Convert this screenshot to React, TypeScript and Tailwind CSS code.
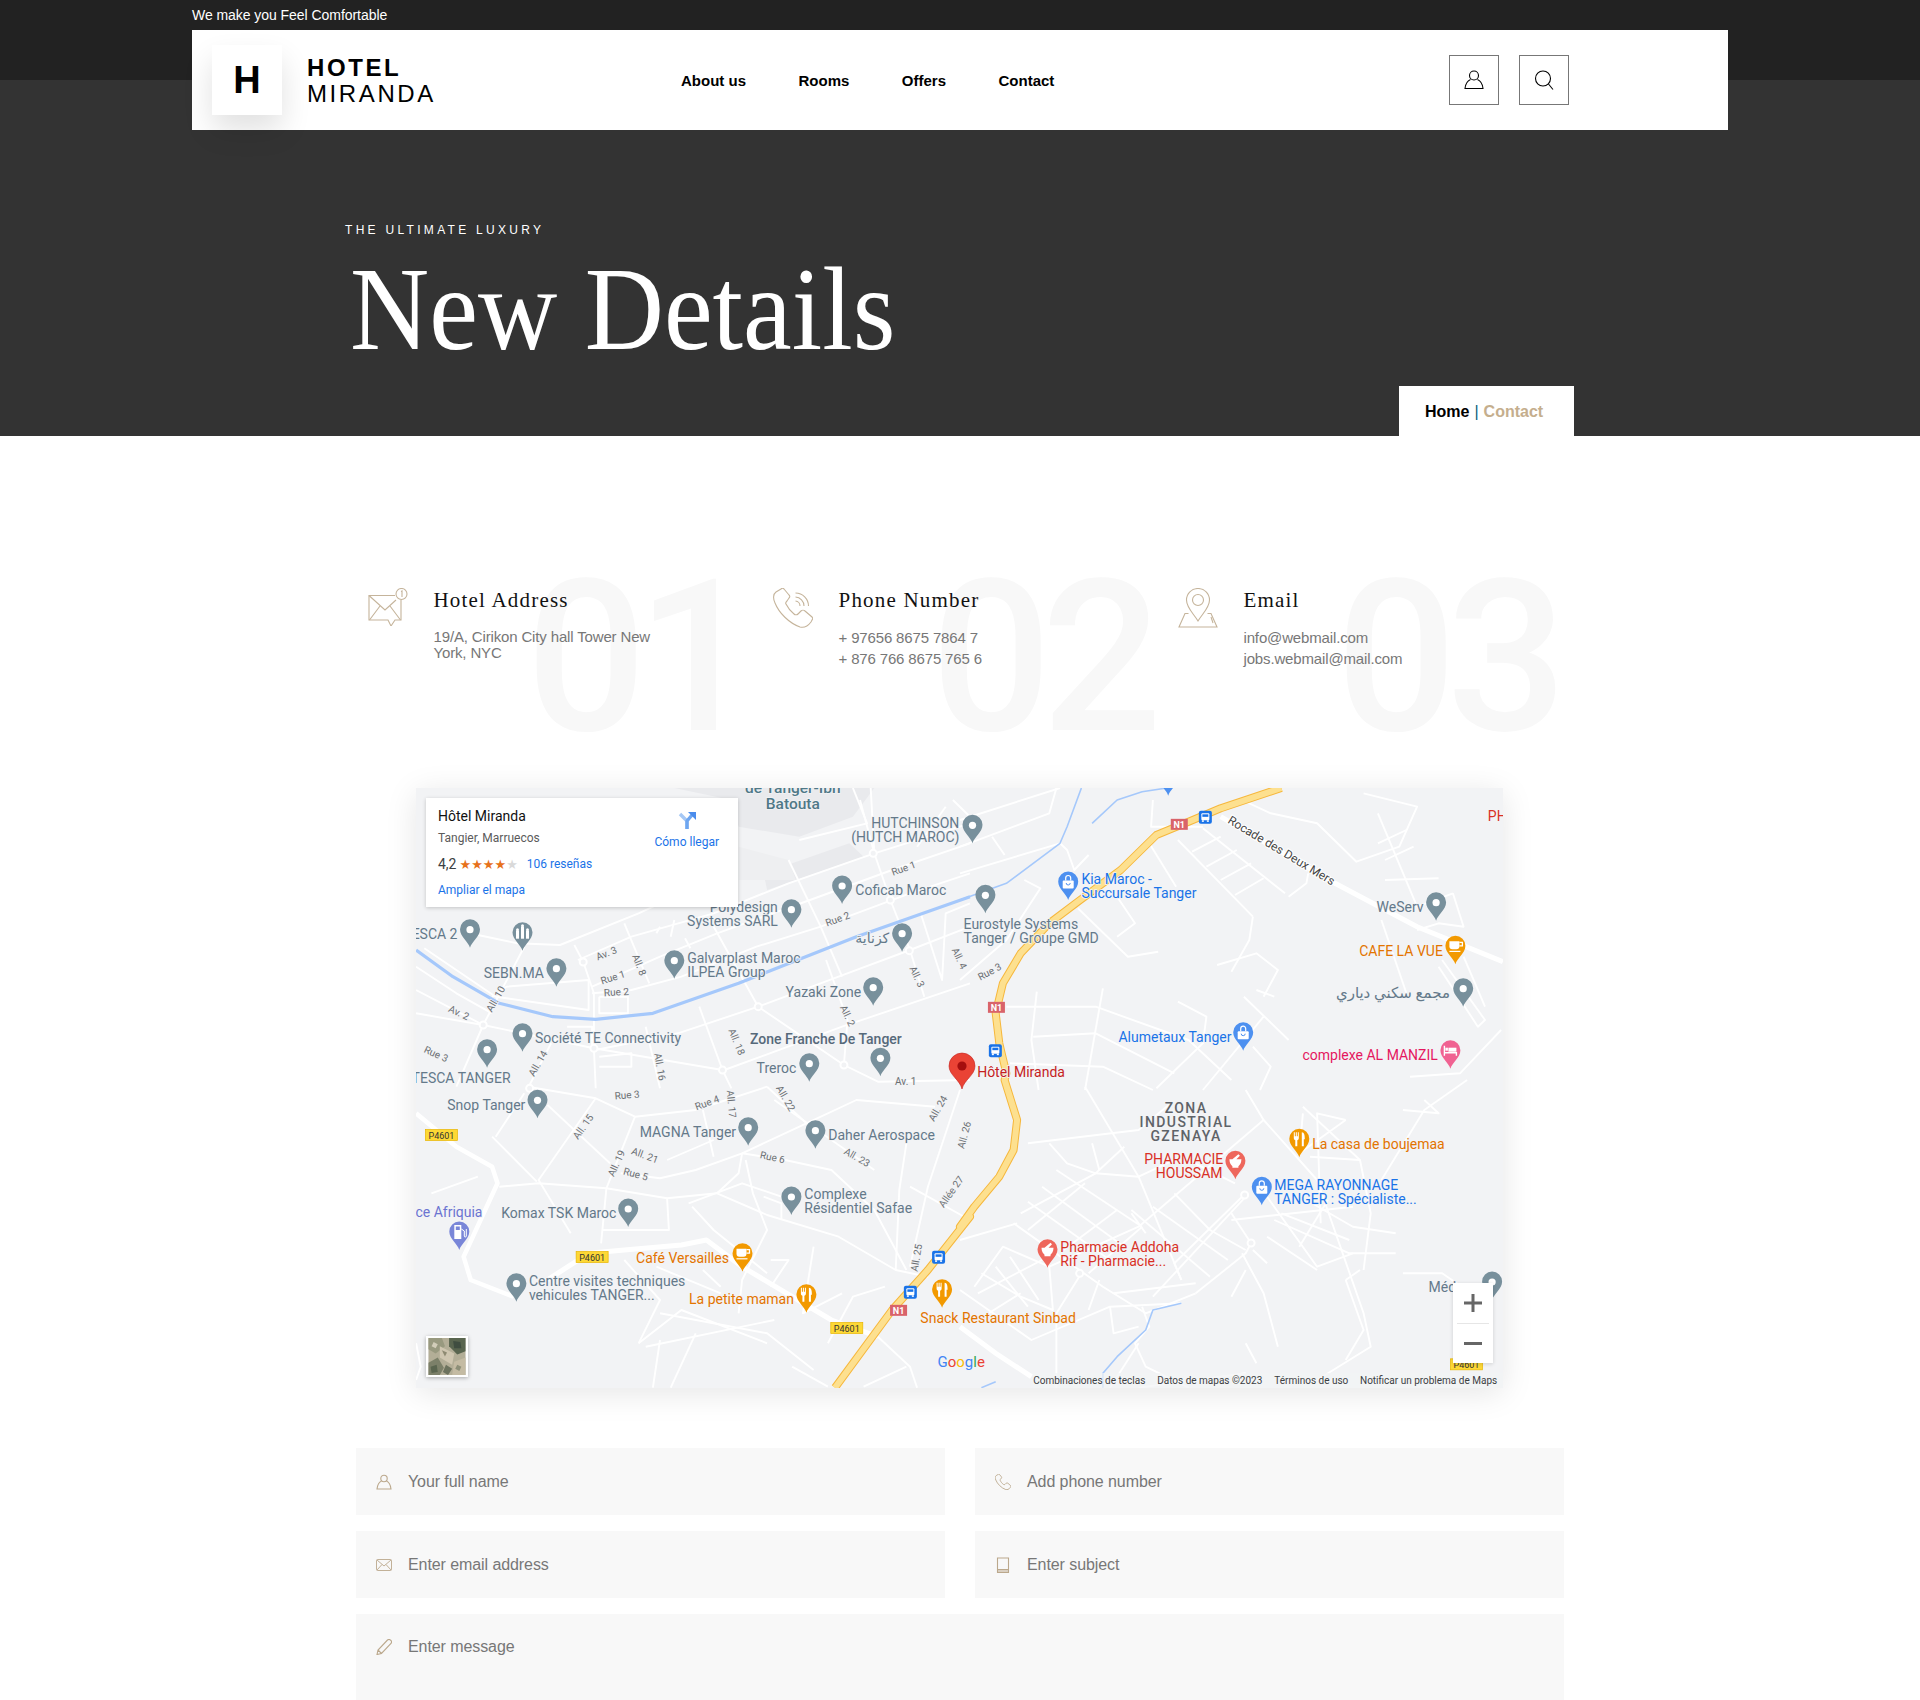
import React from "react";

type Fr = "A" | "B" | "C" | "D";
const F: Record<Fr, [number, number]> = { A: [410, 780], B: [960, 780], C: [410, 1080], D: [960, 1080] };
const X = (f: Fr, x: number) => F[f][0] + x / 2.8;
const Y = (f: Fr, y: number) => F[f][1] + y / 3;
const pts = (f: Fr, s: string) =>
  s
    .trim()
    .split(/\s+/)
    .map((p) => {
      const [a, b] = p.split(",").map(Number);
      return `${X(f, a).toFixed(1)},${Y(f, b).toFixed(1)}`;
    })
    .join(" ");

const thin: [Fr, string][] = [
  ["A", "470,540 620,470 850,400 1060,310 1300,220 1568,130"],
  ["A", "510,620 700,530 860,460 1120,360 1350,270 1568,190"],
  ["A", "510,640 620,630 760,590 970,500 1150,440 1400,340 1568,280"],
  ["A", "975,680 1200,590 1400,510 1568,440"],
  ["A", "520,810 750,760 975,680"],
  ["A", "880,870 1210,740 1568,610"],
  ["A", "17,630 205,735 515,805 875,870"],
  ["A", "17,700 205,735"],
  ["A", "840,420 975,680 1215,855 1310,905 1568,900"],
  ["A", "1060,240 1150,440 1210,590"],
  ["A", "1290,24 1300,220 1345,360 1400,510 1440,650"],
  ["A", "600,430 670,610"],
  ["A", "320,500 205,735 130,920"],
  ["A", "395,790 330,925"],
  ["A", "660,740 700,925"],
  ["A", "810,680 875,870 900,925"],
  ["A", "1165,540 1225,720 1215,855"],
  ["A", "460,495 485,545 515,640 515,805 520,925"],
  ["A", "190,465 300,490 420,495 640,400 700,370"],
  ["A", "40,505 240,650 500,690 500,600 270,620 230,650"],
  ["A", "17,560 130,640 230,700"],
  ["A", "530,650 530,700 610,700 610,650 530,650"],
  ["A", "440,740 510,740 510,800"],
  ["A", "530,830 620,820 620,860 530,860"],
  ["A", "1430,400 1490,600 1500,400 1568,370"],
  ["A", "1260,60 1300,220"],
  ["A", "1090,180 1280,130 1240,24"],
  ["A", "1520,60 1568,110"],
  ["A", "700,440 690,460"],
  ["A", "740,420 730,470"],
  ["A", "770,475 785,505"],
  ["A", "1500,80 1420,200"],
  ["B", "0,120 280,24"],
  ["B", "0,200 250,100 270,24"],
  ["B", "0,280 280,190 300,210 320,270 360,225"],
  ["B", "90,170 125,225"],
  ["B", "180,300 225,325 130,480 0,600"],
  ["B", "530,190 605,320"],
  ["B", "330,385 470,530 555,515"],
  ["B", "440,350 490,430 440,470"],
  ["B", "610,180 820,410"],
  ["B", "680,145 910,340"],
  ["B", "650,215 730,170"],
  ["B", "690,260 775,210"],
  ["B", "730,300 815,250"],
  ["B", "770,345 850,295"],
  ["B", "540,60 535,140 680,140"],
  ["B", "790,60 870,100 1000,130 1110,245 1230,200 1280,80 1130,40"],
  ["B", "1180,420 1250,640"],
  ["B", "1170,100 1280,380 1380,340"],
  ["B", "1170,190 1250,150"],
  ["B", "1190,240 1270,200"],
  ["B", "1190,300 1340,295"],
  ["B", "820,410 810,480 760,575"],
  ["B", "720,555 830,520 890,570 850,650"],
  ["B", "795,650 920,780"],
  ["B", "850,710 680,930"],
  ["B", "830,630 880,650"],
  ["B", "130,680 380,680 640,780 760,900"],
  ["B", "205,770 380,760 600,880"],
  ["B", "400,625 350,930"],
  ["B", "215,635 200,780 220,930"],
  ["B", "610,665 690,710 680,790 550,925"],
  ["B", "820,800 870,860 840,930"],
  ["B", "140,850 400,860 540,930"],
  ["B", "1515,750 1400,880 1260,890"],
  ["B", "1350,540 1470,720 1450,740 1340,560"],
  ["B", "1410,530 1470,680"],
  ["B", "1280,450 1340,430 1410,440 1380,340"],
  ["B", "920,350 970,310 975,280"],
  ["C", "330,20 520,55 630,110 800,90 1000,20"],
  ["C", "385,75 560,250"],
  ["C", "520,55 360,300 450,460"],
  ["C", "230,170 355,305"],
  ["C", "240,170 320,40"],
  ["C", "250,320 360,310 550,325 720,355 860,340 920,280 930,220 800,270 700,295 590,280"],
  ["C", "630,110 550,325 535,490"],
  ["C", "720,240 850,180"],
  ["C", "930,220 1050,240 1180,270 1300,390 1390,570"],
  ["C", "1000,20 1110,130 1250,60 1470,80"],
  ["C", "1110,130 930,220"],
  ["C", "860,340 1000,405 1200,470 1360,570 1450,590"],
  ["C", "940,240 960,340 1000,450 930,600 920,700"],
  ["C", "790,380 850,450 1000,580"],
  ["C", "720,355 725,450 540,450"],
  ["C", "640,790 760,690 1000,790"],
  ["C", "700,700 1000,760 1130,870"],
  ["C", "660,800 1020,720"],
  ["C", "820,90 850,230"],
  ["C", "1540,30 1450,320 1400,560"],
  ["C", "1390,190 1370,330 1360,570"],
  ["C", "1568,420 1400,320"],
  ["C", "1020,60 1300,270"],
  ["C", "1130,500 1100,700 1210,640"],
  ["C", "1010,540 1060,540 1010,620"],
  ["C", "780,370 930,310 1040,350"],
  ["C", "990,350 1040,370 1040,420"],
  ["C", "700,780 680,923"],
  ["C", "800,760 730,923"],
  ["C", "1070,860 1170,920"],
  ["C", "1310,770 1400,860 1420,923"],
  ["C", "1390,860 1270,920"],
  ["C", "1170,790 1240,650 1330,620"],
  ["C", "60,340 190,290"],
  ["C", "690,560 870,640"],
  ["C", "600,540 700,660 640,790"],
  ["C", "820,570 870,620"],
  ["D", "190,190 500,150 590,70"],
  ["D", "350,20 500,290 620,600"],
  ["D", "800,30 850,120 1000,300 1130,700 1150,800 1000,900"],
  ["D", "850,120 500,440 250,560"],
  ["D", "250,190 300,250 380,280 500,290 620,230 770,310"],
  ["D", "170,400 380,280 460,200"],
  ["D", "150,430 400,620 520,700 660,640"],
  ["D", "190,365 420,540"],
  ["D", "230,320 460,500"],
  ["D", "270,270 510,440"],
  ["D", "350,310 190,450"],
  ["D", "440,390 290,510"],
  ["D", "510,440 360,580"],
  ["D", "600,340 700,450 800,510"],
  ["D", "540,380 750,540"],
  ["D", "480,390 700,590"],
  ["D", "790,350 600,550 620,600"],
  ["D", "800,350 540,650"],
  ["D", "760,400 815,490 800,520 660,640"],
  ["D", "760,420 1100,380"],
  ["D", "860,350 1000,560 1100,520"],
  ["D", "860,470 1000,570"],
  ["D", "880,420 1090,520 1220,520"],
  ["D", "900,400 1090,480"],
  ["D", "970,360 1100,440 1220,460"],
  ["D", "950,500 1030,360"],
  ["D", "1010,430 1000,100 1080,120"],
  ["D", "960,80 1120,240 1150,400 1130,570"],
  ["D", "1080,120 950,220 960,100"],
  ["D", "1120,240 980,230"],
  ["D", "1180,300 1300,90 1420,0"],
  ["D", "1240,90 1340,100 1300,60"],
  ["D", "820,510 860,550"],
  ["D", "790,520 850,640 890,800"],
  ["D", "800,570 760,650"],
  ["D", "1080,600 1130,750 1080,840"],
  ["D", "1080,600 1120,570"],
  ["D", "800,790 830,850"],
  ["D", "0,630 200,780 420,680 620,670"],
  ["D", "40,620 120,500 250,560"],
  ["D", "60,580 170,650 260,690 250,560"],
  ["D", "100,560 190,680"],
  ["D", "140,530 220,660"],
  ["D", "50,640 230,540"],
  ["D", "80,700 170,640"],
  ["D", "340,580 270,700 270,923"],
  ["D", "390,600 360,690"],
  ["D", "430,640 660,610"],
  ["D", "420,680 430,760 500,740"],
  ["D", "510,680 530,740 490,790 520,860 640,923"],
  ["D", "500,790 420,923"],
  ["D", "800,880 500,923"],
  ["D", "0,480 160,430"],
  ["D", "1240,580 1350,580 1460,660"],
  ["D", "390,270 370,190"],
  ["D", "480,400 520,460"],
  ["C", "17,790 30,860 17,900"],
];

const blue: [Fr, string, number][] = [
  ["A", "17,510 120,590 250,670 400,710 520,718 680,700 920,610 1250,470 1568,350", 3.2],
  ["B", "0,360 130,310 280,190 300,140 340,24", 1.6],
  ["B", "370,130 440,60 510,35 580,24", 1.6],
  ["D", "620,670 540,690 520,750 440,830 400,880 400,923", 1.6],
  ["D", "100,905 60,923", 1.6],
];

const roundabouts: [Fr, number, number][] = [
  ["A", 485, 546], ["A", 205, 735], ["A", 515, 805], ["A", 875, 870], ["A", 975, 680], ["A", 1215, 855],
  ["A", 1297, 220], ["A", 1345, 360], ["A", 1398, 512], ["D", 797, 345], ["D", 815, 489], ["D", 335, 580], ["C", 335, 25],
];

type Lbl = [Fr, number, number, "start" | "end" | "middle", string, string, number?, number?];
const GR = "#64798a";
const BL = "#1a73e8";
const OR = "#e37400";
const RD = "#d93025";
const labels: Lbl[] = [
  ["A", 1072, 25, "middle", "#4f7887", "de Tanger-Ibn", 500, 15.5],
  ["A", 1072, 73, "middle", "#4f7887", "Batouta", 500, 15.5],
  ["A", 1538, 129, "end", GR, "HUTCHINSON"],
  ["A", 1538, 171, "end", GR, "(HUTCH MAROC)"],
  ["A", 1247, 331, "start", GR, "Coficab Maroc"],
  ["A", 1030, 382, "end", GR, "Polydesign"],
  ["A", 1030, 424, "end", GR, "Systems SARL"],
  ["A", 133, 462, "end", GR, "TESCA 2"],
  ["A", 375, 580, "end", GR, "SEBN.MA"],
  ["A", 776, 535, "start", GR, "Galvarplast Maroc"],
  ["A", 776, 577, "start", GR, "ILPEA Group"],
  ["A", 1342, 475, "end", GR, "كزناية"],
  ["A", 1263, 637, "end", GR, "Yazaki Zone"],
  ["A", 350, 775, "start", GR, "Société TE Connectivity"],
  ["A", 282, 895, "end", GR, "TESCA TANGER"],
  ["A", 952, 778, "start", "#56697a", "Zone Franche De Tanger", 500],
  ["A", 1082, 865, "end", GR, "Treroc"],
  ["B", 10, 433, "start", GR, "Eurostyle Systems"],
  ["B", 10, 475, "start", GR, "Tanger / Groupe GMD"],
  ["B", 340, 298, "start", BL, "Kia Maroc -"],
  ["B", 340, 340, "start", BL, "Succursale Tanger"],
  ["B", 1298, 381, "end", GR, "WeServ"],
  ["B", 1352, 513, "end", OR, "CAFE LA VUE"],
  ["B", 1372, 640, "end", GR, "مجمع سكني دياري", 400, 15],
  ["B", 760, 772, "end", BL, "Alumetaux Tanger"],
  ["B", 1338, 826, "end", "#e5175f", "complexe AL MANZIL"],
  ["B", 48, 877, "start", "#c5221f", "Hôtel Miranda"],
  ["B", 1478, 107, "start", RD, "PH"],
  ["C", 323, 76, "end", GR, "Snop Tanger"],
  ["C", 913, 156, "end", GR, "MAGNA Tanger"],
  ["C", 1171, 166, "start", GR, "Daher Aerospace"],
  ["C", 1104, 343, "start", GR, "Complexe"],
  ["C", 1104, 385, "start", GR, "Résidentiel Safae"],
  ["C", 578, 400, "end", GR, "Komax TSK Maroc"],
  ["C", 203, 397, "end", "#6b74d1", "ce Afriquia"],
  ["C", 893, 535, "end", OR, "Café Versailles"],
  ["C", 333, 604, "start", GR, "Centre visites techniques"],
  ["C", 333, 646, "start", GR, "vehicules TANGER..."],
  ["C", 1075, 658, "end", OR, "La petite maman"],
  ["C", 1429, 714, "start", OR, "Snack Restaurant Sinbad"],
  ["D", 516, 238, "start", RD, "PHARMACIE"],
  ["D", 735, 280, "end", RD, "HOUSSAM"],
  ["D", 986, 193, "start", OR, "La casa de boujemaa"],
  ["D", 880, 316, "start", BL, "MEGA RAYONNAGE"],
  ["D", 880, 358, "start", BL, "TANGER : Spécialiste..."],
  ["D", 281, 501, "start", RD, "Pharmacie Addoha"],
  ["D", 281, 543, "start", RD, "Rif - Pharmacie..."],
  ["D", 1312, 622, "start", GR, "Méd"],
];

const areaLabels: [number, string][] = [
  [85, "ZONA"],
  [127, "INDUSTRIAL"],
  [169, "GZENAYA"],
];

const roadLabels: [Fr, number, number, number, string][] = [
  ["A", 1382, 265, -20, "Rue 1"], ["A", 1197, 417, -20, "Rue 2"], ["A", 550, 520, -22, "Av. 3"],
  ["A", 568, 592, -18, "Rue 1"], ["A", 642, 555, 68, "All. 8"], ["A", 578, 636, -3, "Rue 2"],
  ["A", 240, 657, -60, "All. 10"], ["A", 137, 698, 25, "Av. 2"], ["A", 73, 822, 25, "Rue 3"],
  ["A", 358, 850, -60, "All. 14"], ["A", 700, 860, 80, "All. 16"], ["A", 915, 785, 68, "All. 18"],
  ["A", 1225, 707, 65, "All. 2"], ["A", 1420, 590, 65, "All. 3"], ["A", 1538, 535, 65, "All. 4"],
  ["A", 1388, 904, 0, "Av. 1"], ["B", 83, 575, -28, "Rue 3"], ["C", 608, 45, -5, "Rue 3"],
  ["C", 832, 68, -20, "Rue 4"], ["C", 900, 72, 85, "All. 17"], ["C", 1052, 55, 60, "All. 22"],
  ["C", 1478, 85, -60, "All. 24"], ["C", 1552, 165, -75, "All. 26"], ["C", 485, 140, -55, "All. 15"],
  ["C", 658, 226, 20, "All. 21"], ["C", 578, 250, -65, "All. 19"], ["C", 632, 282, 15, "Rue 5"],
  ["C", 1015, 232, 12, "Rue 6"], ["C", 1252, 232, 30, "All. 23"], ["C", 1515, 335, -55, "Allée 27"],
  ["C", 1418, 533, -80, "All. 25"],
];

type Kind = "dot" | "bag" | "cup" | "fork" | "mortar" | "bed" | "fuel" | "city";
const pins: [Fr, number, number, string, Kind][] = [
  ["A", 1068, 443, "#78909c", "dot"], ["A", 1210, 372, "#78909c", "dot"], ["A", 168, 503, "#78909c", "dot"],
  ["A", 315, 512, "#78909c", "city"], ["A", 410, 620, "#78909c", "dot"], ["A", 740, 596, "#78909c", "dot"],
  ["A", 1378, 515, "#78909c", "dot"], ["A", 1297, 677, "#78909c", "dot"], ["A", 315, 815, "#78909c", "dot"],
  ["A", 216, 863, "#78909c", "dot"], ["A", 1118, 905, "#78909c", "dot"], ["A", 1317, 889, "#78909c", "dot"],
  ["B", 35, 190, "#78909c", "dot"], ["B", 71, 400, "#78909c", "dot"], ["B", 303, 360, "#4d90f0", "bag"],
  ["B", 1333, 422, "#78909c", "dot"], ["B", 1387, 553, "#f29900", "cup"], ["B", 1409, 680, "#78909c", "dot"],
  ["B", 793, 812, "#4d90f0", "bag"], ["B", 1373, 866, "#f06292", "bed"], ["C", 357, 115, "#78909c", "dot"],
  ["C", 947, 197, "#78909c", "dot"], ["C", 1135, 206, "#78909c", "dot"], ["C", 1068, 405, "#78909c", "dot"],
  ["C", 611, 441, "#78909c", "dot"], ["C", 138, 510, "#7986d8", "fuel"], ["C", 931, 575, "#f29900", "cup"],
  ["C", 298, 665, "#78909c", "dot"], ["C", 1110, 698, "#f29900", "fork"], ["C", 1490, 683, "#f29900", "fork"],
  ["D", 771, 298, "#ee675c", "mortar"], ["D", 950, 232, "#f29900", "fork"], ["D", 845, 376, "#4d90f0", "bag"],
  ["D", 245, 563, "#ee675c", "mortar"], ["D", 1490, 660, "#78909c", "dot"], ["B", 583, 47, "#4d90f0", "dot"],
];

function PinGlyph({ k, fill }: { k: Kind; fill: string }) {
  switch (k) {
    case "dot":
      return <circle cx="0" cy="-18" r="3.6" fill="#fff" />;
    case "bag":
      return (
        <g>
          <rect x="-5.5" y="-19.5" width="11" height="8" rx="1" fill="#fff" />
          <path d="M-2.5 -19.5 V-22 a2.5 2.5 0 0 1 5 0 V-19.5" fill="none" stroke="#fff" strokeWidth="1.2" />
          <path d="M-2 -17 a2 2 0 0 0 4 0" fill="none" stroke={fill} strokeWidth="1" />
        </g>
      );
    case "cup":
      return (
        <g>
          <path d="M-6 -23 H4 V-18 a3 3 0 0 1 -3 3 H-3 a3 3 0 0 1 -3 -3Z" fill="#fff" />
          <path d="M4 -22 H7 V-18.5 H4" fill="none" stroke="#fff" strokeWidth="1.3" />
          <rect x="-6" y="-13.5" width="11" height="1.2" fill="#fff" />
        </g>
      );
    case "fork":
      return (
        <g fill="#fff">
          <path d="M-5.5 -25 h1 v4 h1 v-4 h1 v4 h1 v-4 h1 v6 a2 2 0 0 1 -1.5 2 V-11 h-2 v-6 a2 2 0 0 1 -1.5 -2Z" />
          <path d="M2.5 -25 c2.5 0 3 3 3 7 h-1 V-11 h-2Z" />
        </g>
      );
    case "mortar":
      return <path d="M-6 -20 H-3 L3 -25 L4.5 -23.5 L1 -20 H6 C6 -16 4 -14 3 -13 V-11.5 H-3 V-13 C-4 -14 -6 -16 -6 -20Z" fill="#fff" />;
    case "bed":
      return (
        <g fill="none" stroke="#fff" strokeWidth="1.4">
          <path d="M-6 -23 V-13 M-6 -16 H6 V-13" />
          <rect x="-5" y="-21" width="2.5" height="3" fill="#fff" stroke="none" />
          <rect x="-2" y="-21" width="8" height="4" fill="#fff" stroke="none" />
        </g>
      );
    case "fuel":
      return (
        <g fill="#fff">
          <path d="M-5 -25 H2 V-11 H-5Z" />
          <rect x="-3.5" y="-23.5" width="4" height="3.5" fill={fill} />
          <path d="M2 -21 L5 -19 V-14 a1 1 0 0 0 2 0 V-21" fill="none" stroke="#fff" strokeWidth="1" />
        </g>
      );
    case "city":
      return (
        <g fill="#fff">
          <rect x="-6.5" y="-20" width="3" height="8" />
          <rect x="-1.5" y="-24" width="3" height="12" />
          <rect x="3.5" y="-20" width="3" height="8" />
          <circle cx="-5" cy="-21" r="1.5" />
          <circle cx="0" cy="-25" r="1.5" />
          <circle cx="5" cy="-21" r="1.5" />
        </g>
      );
  }
}

function Pin({ f, x, y, fill, k }: { f: Fr; x: number; y: number; fill: string; k: Kind }) {
  return (
    <g transform={`translate(${X(f, x).toFixed(1)} ${Y(f, y).toFixed(1)})`}>
      <path d="M0 0 C-1.5 -6 -10 -11 -10 -18.5 A10 10 0 1 1 10 -18.5 C10 -11 1.5 -6 0 0Z" fill={fill} />
      <PinGlyph k={k} fill={fill} />
    </g>
  );
}

function Shield({ f, x, y, t }: { f: Fr; x: number; y: number; t: string }) {
  const cx = X(f, x);
  const cy = Y(f, y);
  return (
    <g>
      <rect x={cx - 8.5} y={cy - 5.5} width="17" height="11" fill="#d9636a" />
      <text x={cx} y={cy + 0.5} textAnchor="middle" dominantBaseline="central" fontSize="9" fontWeight="700" fill="#fff">
        {t}
      </text>
    </g>
  );
}

function P4601({ f, x, y }: { f: Fr; x: number; y: number }) {
  const cx = X(f, x);
  const cy = Y(f, y);
  return (
    <g>
      <rect x={cx - 16} y={cy - 5.5} width="32" height="11" fill="#fdd835" stroke="#e8b500" strokeWidth="0.7" />
      <text x={cx} y={cy + 0.5} textAnchor="middle" dominantBaseline="central" fontSize="9" fill="#333">
        P4601
      </text>
    </g>
  );
}

function Bus({ f, x, y }: { f: Fr; x: number; y: number }) {
  const cx = X(f, x);
  const cy = Y(f, y);
  return (
    <g transform={`translate(${cx} ${cy})`}>
      <rect x="-6.5" y="-6.5" width="13" height="13" rx="2" fill="#1a73e8" />
      <rect x="-4" y="-4" width="8" height="7" rx="1" fill="#fff" />
      <rect x="-3" y="-3" width="6" height="2.5" fill="#1a73e8" />
      <rect x="-3.5" y="3" width="2" height="1.5" fill="#fff" />
      <rect x="1.5" y="3" width="2" height="1.5" fill="#fff" />
    </g>
  );
}

function MapDrawing() {
  const yellow = [
    `${pts("B", "900,24 730,85 640,125 550,165 450,270 330,365 250,430 170,520 120,610 100,700 110,790 130,880")}`,
    `${pts("D", "125,0 160,120 150,210 110,290 40,380 0,440")}`,
    `${pts("C", "1568,410 1450,570 1350,690 1190,923")}`,
  ].join(" ");
  return (
    <svg viewBox="416 788 1087 600" className="block h-full w-full bg-[#f2f3f5]" fontFamily="Roboto, 'DejaVu Sans', sans-serif">
      <polygon points={pts("A", "740,24 1300,24 1240,110 1090,170 920,140 900,60")} fill="#e9eaed" />
      <polygon points={pts("A", "990,280 1230,190 1270,230 1000,330")} fill="#e9eaed" />
      <polygon points={pts("A", "920,200 1060,240 1080,300 920,300")} fill="#eeeff1" />
      {thin.map(([f, s], i) => (
        <polyline key={i} points={pts(f, s)} fill="none" stroke="#fff" strokeWidth="1.9" strokeLinejoin="round" />
      ))}
      {roundabouts.map(([f, x, y], i) => (
        <circle key={i} cx={X(f, x)} cy={Y(f, y)} r="3.5" fill="#f2f3f5" stroke="#fff" strokeWidth="2" />
      ))}
      {blue.map(([f, s, w], i) => (
        <polyline key={i} points={pts(f, s)} fill="none" stroke="#a5c8fb" strokeWidth={w} strokeLinejoin="round" />
      ))}
      <polyline points={pts("B", "730,110 1050,310 1280,440 1520,545")} fill="none" stroke="#fff" strokeWidth="5" />
      <polyline points={pts("C", "17,100 130,200 230,260 245,310 150,530 170,600 290,650")} fill="none" stroke="#fff" strokeWidth="4.5" strokeLinejoin="round" />
      <polyline points={pts("C", "370,610 500,520 600,510 760,495 830,480 930,560 1180,720 1310,770")} fill="none" stroke="#fff" strokeWidth="5" strokeLinejoin="round" />
      <polyline points={pts("D", "0,740 100,820 200,890")} fill="none" stroke="#fff" strokeWidth="5" />
      <polyline points={yellow} fill="none" stroke="#f6b73c" strokeWidth="8" strokeLinejoin="round" />
      <polyline points={yellow} fill="none" stroke="#fde08f" strokeWidth="6" strokeLinejoin="round" />
      {pins.map(([f, x, y, c, k], i) => (
        <Pin key={i} f={f} x={x} y={y} fill={c} k={k} />
      ))}
      <g paintOrder="stroke" stroke="#f2f3f5" strokeWidth="1.5">
        {labels.map(([f, x, y, a, c, t, w, s], i) => (
          <text key={i} x={X(f, x)} y={Y(f, y)} textAnchor={a} dominantBaseline="central" fill={c} fontWeight={w || 400} fontSize={s || 14}>
            {t}
          </text>
        ))}
      </g>
      <g fontSize="14" fontWeight="500" fill="#5f6368" letterSpacing="1.4" textAnchor="middle" paintOrder="stroke" stroke="#f2f3f5" strokeWidth="1.5">
        {areaLabels.map(([y, t]) => (
          <text key={t} x={X("D", 633)} y={Y("D", y)} dominantBaseline="central">
            {t}
          </text>
        ))}
      </g>
      <text
        transform={`translate(${X("B", 900)} ${Y("B", 212)}) rotate(31)`}
        textAnchor="middle"
        dominantBaseline="central"
        fontSize="12"
        fill="#444"
        paintOrder="stroke"
        stroke="#fff"
        strokeWidth="2"
      >
        Rocade des Deux Mers
      </text>
      <g fontSize="10" fill="#6b6f73" paintOrder="stroke" stroke="#f2f3f5" strokeWidth="1.5">
        {roadLabels.map(([f, x, y, r, t], i) => (
          <text key={i} textAnchor="middle" dominantBaseline="central" transform={`translate(${X(f, x).toFixed(1)} ${Y(f, y).toFixed(1)}) rotate(${r})`}>
            {t}
          </text>
        ))}
      </g>
      <Shield f="B" x={614} y={133} t="N1" />
      <Shield f="B" x={102} y={682} t="N1" />
      <Shield f="C" x={1368} y={691} t="N1" />
      <P4601 f="C" x={88} y={165} />
      <P4601 f="C" x={510} y={531} />
      <P4601 f="C" x={1223} y={744} />
      <P4601 f="D" x={1418} y={853} />
      <Bus f="B" x={687} y={112} />
      <Bus f="B" x={99} y={812} />
      <Bus f="C" x={1480} y={532} />
      <Bus f="C" x={1401} y={637} />
      <g transform="translate(962 1089)">
        <path d="M0 0 C-2 -9 -13 -14 -13 -23 A13 13 0 1 1 13 -23 C13 -14 2 -9 0 0Z" fill="#ea4335" stroke="#c5221f" strokeWidth="0.6" />
        <circle cx="0" cy="-23" r="4.6" fill="#a50e0e" />
      </g>
      <text x={X("C", 1477)} y={Y("D", 845)} dominantBaseline="central" fontSize="15" fontWeight="400">
        <tspan fill="#4285f4">G</tspan>
        <tspan fill="#ea4335">o</tspan>
        <tspan fill="#fbbc05">o</tspan>
        <tspan fill="#4285f4">g</tspan>
        <tspan fill="#34a853">l</tspan>
        <tspan fill="#ea4335">e</tspan>
      </text>
      <g fontSize="10" fill="#3c4043" dominantBaseline="central">
        <rect x="1033" y="1373" width="470" height="15" fill="#f2f3f5" opacity="0.7" stroke="none" />
        <text x={X("D", 205)} y={Y("D", 902)}>Combinaciones de teclas</text>
        <text x={X("D", 552)} y={Y("D", 902)}>Datos de mapas ©2023</text>
        <text x={X("D", 880)} y={Y("D", 902)}>Términos de uso</text>
        <text x={X("D", 1120)} y={Y("D", 902)}>Notificar un problema de Maps</text>
      </g>
    </svg>
  );
}

function Satellite() {
  return (
    <svg viewBox="0 0 36 36" className="h-full w-full">
      <rect width="36" height="36" fill="#b3ae97" />
      <path d="M0 0 H13 L16 8 L7 15 L0 11Z" fill="#98997f" />
      <path d="M20 0 H36 V13 L28 16 L20 8Z" fill="#59654f" />
      <path d="M24 3 L31 4 L32 10 L25 10Z" fill="#3f4d40" />
      <path d="M0 24 L9 19 L15 29 L11 36 H0Z" fill="#7c8069" />
      <path d="M2 28 L8 26 L9 33 L3 34Z" fill="#5a654f" />
      <path d="M11 8 L25 15 L23 26 L11 19Z" fill="#cfc6b0" />
      <path d="M25 23 L36 19 V36 H23Z" fill="#c4bba3" />
      <path d="M5 4 L9 6 L7 10 L3 8Z" fill="#d2cdb9" />
      <path d="M17 26 L23 30 L19 36 L14 33Z" fill="#6d735e" />
      <path d="M28 26 L32 28 L30 32 L26 30Z" fill="#8d8f78" />
      <path d="M13 12 L18 14 L16 18Z" fill="#8e8a72" />
    </svg>
  );
}

const iconCls = "fill-none stroke-[#c5b49b]";

function EnvelopeBig() {
  return (
    <svg viewBox="0 0 40 38" className={`h-[38px] w-[40px] ${iconCls}`} strokeWidth="1.1">
      <path d="M27 7.5 H1 V32 H20 L23 38 L27 32 H33 V12" />
      <path d="M1 7.5 L17 22 L28 12 M1.5 32 L12 18 M32.5 32 L22 18" />
      <circle cx="33.5" cy="6" r="5.5" />
      <path d="M33 3.5 L34 3 V9" />
    </svg>
  );
}

function PhoneBig() {
  return (
    <svg viewBox="0 0 40 40" className={`h-[40px] w-[40px] ${iconCls}`} strokeWidth="1.1">
      <path d="M8 1 L3 4 C0 6 0 11 2 15 C6 25 16 35 27 39 C31 40 35 38 38 34 L39 32 C40 31 40 30 39 29 L32 23 C31 22 29 22 28 23 L25 26 C24 27 22 27 21 26 C17 23 15 20 13 16 C12 15 13 14 14 13 L16 10 C17 9 17 8 16 7 L11 1 C10 0 9 0 8 1Z" />
      <path d="M22.5 13 A5 5 0 0 1 27 18 M22.5 9 A9 9 0 0 1 31 18 M22.5 5 A13 13 0 0 1 35.5 18" />
    </svg>
  );
}

function PinBig() {
  return (
    <svg viewBox="0 0 40 40" className={`h-[40px] w-[40px] ${iconCls}`} strokeWidth="1.1">
      <path d="M20 33 C16 26 8.5 20 8.5 12 A11.5 11.5 0 0 1 31.5 12 C31.5 20 24 26 20 33Z" />
      <circle cx="20" cy="12" r="5.5" />
      <path d="M10.5 25.5 H7 L1 39 H39 L33 25.5 H29.5" />
      <path d="M33 29 L35 35" />
    </svg>
  );
}

function SmallIcon({ k }: { k: "user" | "mail" | "phone" | "book" | "pen" }) {
  const c = "h-[16px] w-[16px] fill-none stroke-[#bba88c]";
  if (k === "user")
    return (
      <svg viewBox="0 0 16 16" className={c} strokeWidth="1.1">
        <circle cx="8" cy="4.5" r="3.2" />
        <path d="M5.5 7 C3 8 1.5 11 1 15 H15 C14.5 11 13 8 10.5 7" />
      </svg>
    );
  if (k === "mail")
    return (
      <svg viewBox="0 0 16 16" className={c} strokeWidth="0.9">
        <rect x="0.5" y="2.5" width="15" height="11" rx="1" />
        <path d="M1 3 L8 9 L15 3 M1 13 L6 7.5 M15 13 L10 7.5" />
      </svg>
    );
  if (k === "phone")
    return (
      <svg viewBox="0 0 40 40" className={c} strokeWidth="2.2">
        <path d="M8 1 L3 4 C0 6 0 11 2 15 C6 25 16 35 27 39 C31 40 35 38 38 34 L39 32 C40 31 40 30 39 29 L32 23 C31 22 29 22 28 23 L25 26 C24 27 22 27 21 26 C17 23 15 20 13 16 C12 15 13 14 14 13 L16 10 C17 9 17 8 16 7 L11 1 C10 0 9 0 8 1Z" />
      </svg>
    );
  if (k === "book")
    return (
      <svg viewBox="0 0 16 16" className={c} strokeWidth="1.1">
        <path d="M2.5 1 H13.5 V15.5 H2.5Z M2.5 12.5 H13.5 M2.5 14 H13.5" />
      </svg>
    );
  return (
    <svg viewBox="0 0 16 16" className={c} strokeWidth="1.1">
      <path d="M1 15.5 L2 11 L11.5 1 C12.5 0.2 14 0.5 15 1.5 C15.7 2.5 15.7 3.5 15 4.5 L5.5 14.5Z M2 11 L5.5 14.5" />
    </svg>
  );
}

const navItems = ["About us", "Rooms", "Offers", "Contact"];

const cards = [
  { icon: <EnvelopeBig />, title: "Hotel Address", num: "01", lines: ["19/A, Cirikon City hall Tower New York, NYC"], tight: true },
  { icon: <PhoneBig />, title: "Phone Number", num: "02", lines: ["+ 97656 8675 7864 7", "+ 876 766 8675 765 6"], tight: false },
  { icon: <PinBig />, title: "Email", num: "03", lines: ["info@webmail.com", "jobs.webmail@mail.com"], tight: false },
];

function Field({ k, text }: { k: "user" | "mail" | "phone" | "book" | "pen"; text: string }) {
  return (
    <div className="flex h-[67px] items-center bg-[#f8f8f8] pl-[20px]">
      <SmallIcon k={k} />
      <span className="ml-[16px] text-[16px] leading-none tracking-[-0.08px] text-[#777]">{text}</span>
    </div>
  );
}

export default function App() {
  return (
    <div className="h-[1700px] overflow-hidden bg-white font-['Liberation_Sans',Arial,sans-serif]">
      <section className="flex h-[436px] flex-col bg-[#333]">
        <div className="h-[80px] bg-[#222] px-[192px]">
          <p className="text-[14px] leading-[30px] tracking-[-0.05px] text-white">We make you Feel Comfortable</p>
        </div>
        <header className="relative mx-[192px] -mt-[50px] flex h-[100px] items-center bg-white">
          <div className="ml-[20px] flex h-[70px] w-[70px] items-center justify-center bg-white text-[38px] font-bold text-black shadow-[0_15px_30px_rgba(0,0,0,0.12)]">
            H
          </div>
          <div className="ml-[25px] mt-[2px] text-[24px] leading-[26px] tracking-[2.6px] text-black">
            <div className="font-bold">HOTEL</div>
            <div>MIRANDA</div>
          </div>
          <nav className="absolute left-[489px] top-[41px] flex gap-[52.5px] text-[15px] font-bold leading-[20px] text-black">
            {navItems.map((n) => (
              <span key={n}>{n}</span>
            ))}
          </nav>
          <div className="absolute left-[1257px] flex gap-[20px]">
            <button className="flex h-[50px] w-[50px] items-center justify-center border border-[#777]">
              <svg viewBox="0 0 20 20" className="h-[20px] w-[20px] fill-none stroke-black" strokeWidth="1.1">
                <circle cx="10" cy="5.5" r="4.5" />
                <path d="M6.5 9.5 C3 11 1.5 14 1 18.5 H19 C18.5 14 17 11 13.5 9.5" />
              </svg>
            </button>
            <button className="flex h-[50px] w-[50px] items-center justify-center border border-[#777]">
              <svg viewBox="0 0 20 20" className="h-[20px] w-[20px] fill-none stroke-black" strokeWidth="1.1">
                <circle cx="9" cy="8.5" r="7.5" />
                <path d="M14.5 14 L19 19.5" />
              </svg>
            </button>
          </div>
        </header>
        <p className="ml-[345px] mt-[93px] text-[12px] font-medium leading-[14px] tracking-[3.3px] text-white">THE ULTIMATE LUXURY</p>
        <h1 className="ml-[350px] mt-[13px] origin-left scale-x-[0.93] font-['Liberation_Serif',serif] text-[118px] font-normal leading-[120px] text-white">
          New Details
        </h1>
        <div className="ml-[1399px] mt-auto flex h-[50px] w-[175px] items-center bg-white pl-[26px] pt-[2px] text-[16px] font-bold">
          <span className="text-black">Home</span>
          <span className="mx-[5px] font-normal text-[#0b5f7a]">|</span>
          <span className="text-[#c5ae8d]">Contact</span>
        </div>
      </section>

      <section className="ml-[356px] grid w-[1215px] grid-cols-3 pt-[152px]">
        {cards.map((c) => (
          <div key={c.num} className="relative h-[200px] pl-[12px]">
            <span className="absolute left-[170px] top-[-55px] font-['Roboto',sans-serif] text-[212px] font-medium leading-[250px] tracking-[-10px] text-[#f8f8f8]">
              {c.num}
            </span>
            <div className="relative flex">
              <div className="w-[65.5px] shrink-0">{c.icon}</div>
              <div className="w-[225px]">
                <h3 className="font-['Liberation_Serif',serif] text-[21px] font-normal leading-[24px] tracking-[1.2px] text-[#111]">{c.title}</h3>
                <div className={`text-[15px] tracking-[-0.15px] text-[#777] ${c.tight ? "mt-[17px] leading-[16px]" : "mt-[15px] leading-[21px]"}`}>
                  {c.lines.map((l) => (
                    <p key={l}>{l}</p>
                  ))}
                </div>
              </div>
            </div>
          </div>
        ))}
      </section>

      <section className="relative ml-[416px] h-[600px] w-[1087px] shadow-[0_5px_30px_rgba(0,0,0,0.1)]">
        <MapDrawing />
        <div className="absolute left-[10px] top-[10px] flex h-[109px] w-[312px] justify-between bg-white px-[12px] py-[9px] font-['Roboto',sans-serif] shadow-[0_1px_4px_rgba(0,0,0,0.2)]">
          <div>
            <p className="text-[14px] font-normal leading-[18px] text-[#111]">Hôtel Miranda</p>
            <p className="mt-[5px] text-[12px] leading-[16px] text-[#5b5b5b]">Tangier, Marruecos</p>
            <div className="mt-[9px] flex items-center text-[14px] leading-[18px] text-[#3c4043]">
              <span>4,2</span>
              <span className="ml-[3px] font-['DejaVu_Sans',sans-serif] text-[13px] leading-none text-[#e7711b]">★★★★</span>
              <span className="font-['DejaVu_Sans',sans-serif] text-[13px] leading-none text-[#d9d9d9]">★</span>
              <span className="ml-[9px] text-[12px] text-[#1a73e8]">106 reseñas</span>
            </div>
            <p className="mt-[9px] text-[12px] leading-[16px] text-[#1a73e8]">Ampliar el mapa</p>
          </div>
          <div className="mr-[7px] flex flex-col items-center pt-[4px]">
            <svg viewBox="0 0 18 18" className="h-[18px] w-[18px]">
              <path d="M9 18 V10 L2 3" fill="none" stroke="#a6c8f5" strokeWidth="3.4" />
              <path d="M9 18 V10 L14 4" fill="none" stroke="#6ea6f0" strokeWidth="3.4" />
              <path d="M10 1 H18 V9Z" fill="#4a8cec" />
            </svg>
            <p className="mt-[5px] text-[12px] leading-[16px] text-[#1a73e8]">Cómo llegar</p>
          </div>
        </div>
        <div className="absolute left-[10px] top-[548px] h-[41px] w-[42px] overflow-hidden border-2 border-white shadow-[0_1px_4px_rgba(0,0,0,0.3)]">
          <Satellite />
        </div>
        <div className="absolute left-[1037px] top-[495px] flex h-[80px] w-[40px] flex-col items-center bg-white shadow-[0_1px_4px_rgba(0,0,0,0.15)]">
          <div className="flex h-[40px] w-full items-center justify-center">
            <svg viewBox="0 0 18 18" className="h-[18px] w-[18px] fill-[#666]">
              <path d="M7.5 0 H10.5 V7.5 H18 V10.5 H10.5 V18 H7.5 V10.5 H0 V7.5 H7.5Z" />
            </svg>
          </div>
          <div className="h-px w-[32px] bg-[#e6e6e6]" />
          <div className="flex h-[39px] w-full items-center justify-center">
            <div className="h-[3px] w-[18px] bg-[#666]" />
          </div>
        </div>
      </section>

      <section className="ml-[356px] mt-[60px] grid w-[1208px] grid-cols-2 gap-x-[30px] gap-y-[16px]">
        <Field k="user" text="Your full name" />
        <Field k="phone" text="Add phone number" />
        <Field k="mail" text="Enter email address" />
        <Field k="book" text="Enter subject" />
        <div className="col-span-2 flex h-[120px] items-start bg-[#f8f8f8] pl-[20px] pt-[25px]">
          <SmallIcon k="pen" />
          <span className="ml-[16px] text-[16px] leading-none tracking-[-0.08px] text-[#777]">Enter message</span>
        </div>
      </section>
    </div>
  );
}
